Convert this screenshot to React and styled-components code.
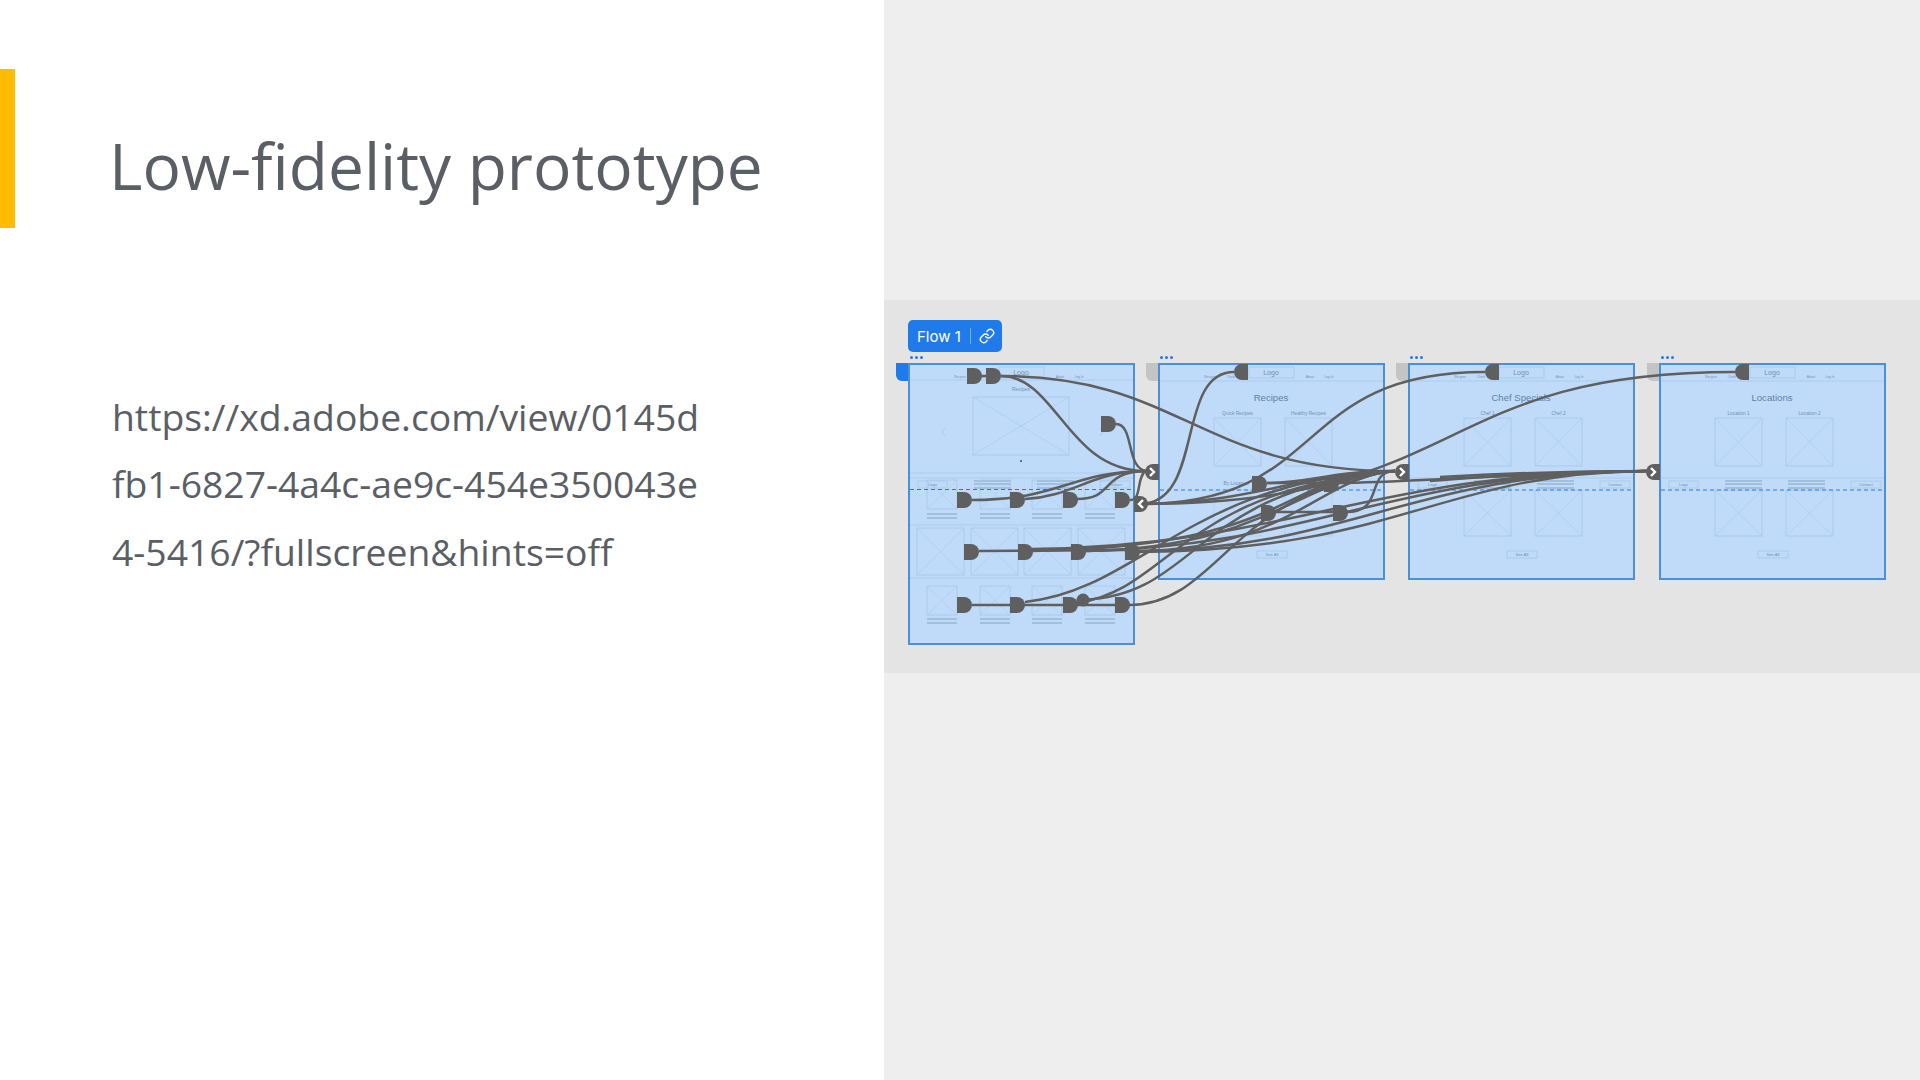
import React from 'react';
import styled, { createGlobalStyle } from 'styled-components';
import { Link } from 'lucide-react';

const GlobalStyle = createGlobalStyle`
  html, body {
    margin: 0;
    padding: 0;
    background: #fff;
  }
`;

const Page = styled.div`
  display: flex;
  width: 1920px;
  height: 1080px;
  overflow: hidden;
  font-family: "Open Sans", sans-serif;
`;

const SlidePanel = styled.section`
  width: 884px;
  padding-top: 69px;
  box-sizing: border-box;
  background: #fff;
  color: #5a5e65;
`;

const Header = styled.header`
  display: flex;
  align-items: flex-start;
`;

const AccentBar = styled.div`
  width: 15px;
  height: 159px;
  background: #ffbc00;
`;

const Title = styled.h1`
  margin: 57px 0 0 94px;
  font-size: 64px;
  line-height: 80px;
  font-weight: 400;
  white-space: nowrap;
`;

const LinkText = styled.div`
  margin: 155px 0 0 112px;
  font-size: 37.3px;
  line-height: 67.4px;
  font-weight: 400;
  white-space: nowrap;
`;

const FlowPanel = styled.section`
  flex: 1;
  padding-top: 300px;
  background: #eeeeee;
`;

const FlowCanvas = styled.div`
  position: relative;
  height: 373px;
  background: #e4e4e4;
`;

const FlowChip = styled.div`
  position: absolute;
  left: 24px;
  top: 20px;
  display: flex;
  align-items: center;
  width: 94px;
  height: 32px;
  padding-left: 9px;
  box-sizing: border-box;
  border-radius: 5px;
  background: #1f7aea;
  color: #fff;
  font-family: Inter, sans-serif;
  font-size: 15px;
`;

const ChipDivider = styled.span`
  width: 1px;
  height: 16px;
  margin: 0 8px 0 9px;
  background: rgba(255, 255, 255, 0.4);
`;

const Artboard = styled.div`
  position: absolute;
  left: ${(p) => p.$x - 884}px;
  top: 63px;
  width: 227px;
  height: ${(p) => p.$h}px;
`;

const ArtTab = styled.div`
  position: absolute;
  left: -12px;
  top: 0;
  width: 16px;
  height: 18px;
  border-radius: 0 0 0 6px;
  background: ${(p) => (p.$active ? '#1f7aea' : '#c4c4c4')};
`;

const ArtDots = styled.div`
  position: absolute;
  left: 2px;
  top: -7px;
  display: flex;
  gap: 2px;
`;

const ArtDot = styled.span`
  width: 3px;
  height: 3px;
  border-radius: 50%;
  background: #1f7aea;
`;

const ArtFrame = styled.svg`
  position: absolute;
  inset: 0;
  display: block;
  background: #bfdbf9;
  box-shadow: inset 0 0 0 2px #4a8fd8;
`;

const WireLayer = styled.svg`
  position: absolute;
  inset: 0;
  width: 100%;
  height: 100%;
  pointer-events: none;
`;

const INK = '#a6c4e6';
const LABEL = '#7391b5';

const Box = ({ x, y, w, h }) => (
  <rect x={x} y={y} width={w} height={h} fill="none" stroke={INK} strokeWidth="0.7" />
);

// wireframe image placeholder, a box with a cross
const Placeholder = ({ x, y, w, h, faint }) => (
  <g opacity={faint ? 0.65 : 1}>
    <Box x={x} y={y} w={w} h={h} />
    <path d={`M${x} ${y}L${x + w} ${y + h}M${x + w} ${y}L${x} ${y + h}`} stroke={INK} strokeWidth="0.5" />
  </g>
);

const Label = ({ x, y, size = 4.8, color = LABEL, anchor = 'middle', children }) => (
  <text x={x} y={y} fontSize={size} fill={color} textAnchor={anchor} fontFamily="Liberation Sans, sans-serif">
    {children}
  </text>
);

const Lines = ({ x, w, ys, width = 1 }) => (
  <g stroke="#86a3c4" strokeWidth={width}>
    {ys.map((y) => (
      <line key={y} x1={x} x2={x + w} y1={y} y2={y} />
    ))}
  </g>
);

const TopNav = ({ lineY }) => (
  <>
    <Box x={91} y={4} w={45} h={11} />
    <line x1="2" x2="225" y1={lineY} y2={lineY} stroke={INK} strokeWidth="0.6" />
    <Label x={113} y={12} size={7}>Logo</Label>
    <Label x={52} y={14.5} size={3.2}>Recipes</Label>
    <Label x={73} y={14.5} size={3.2}>Chefs</Label>
    <Label x={152} y={14.5} size={3.2}>About</Label>
    <Label x={171} y={14.5} size={3.2}>Log In</Label>
  </>
);

const FooterBar = ({ y }) => (
  <>
    <line x1="2" x2="225" y1={y - 3} y2={y - 3} stroke={INK} strokeWidth="0.6" />
    <Box x={10} y={y} w={29} h={7} />
    <Label x={24.5} y={y + 5} size={4}>Logo</Label>
    <Lines x={66} w={37} ys={[y, y + 3, y + 7]} />
    <Lines x={129} w={37} ys={[y, y + 3, y + 7]} />
    <Box x={192} y={y} w={30} h={7} />
    <Label x={207} y={y + 5} size={4}>Contact</Label>
  </>
);

const HomeSketch = () => (
  <ArtFrame width="227" height="282" viewBox="0 0 227 282">
    <TopNav lineY={17} />
    <Label x={113} y={28} size={5}>Recipes</Label>
    <Placeholder x={65} y={34} w={96} h={58} />
    <path d="M37 65l-3 4 3 4M192 65l3 4-3 4" fill="none" stroke={INK} strokeWidth="0.8" />
    <circle cx="113" cy="98" r="0.9" fill="#2f3f55" />
    <line x1="2" x2="225" y1="110" y2="110" stroke={INK} strokeWidth="0.6" />
    <FooterBar y={118} />
    {[19, 72, 124, 177].map((x) => (
      <React.Fragment key={x}>
        <Placeholder x={x} y={117} w={30} h={29} />
        <Lines x={x} w={30} ys={[151, 155]} />
        <Placeholder x={x} y={223} w={30} h={29} />
        <Lines x={x} w={30} ys={[256, 260]} />
      </React.Fragment>
    ))}
    <line x1="2" x2="225" y1="162" y2="162" stroke={INK} strokeWidth="0.6" />
    {[9, 63, 116, 170].map((x) => (
      <Placeholder key={x} x={x} y={165} w={47} h={47} />
    ))}
    <line x1="2" x2="225" y1="215" y2="215" stroke={INK} strokeWidth="0.6" />
    <line x1="2" x2="225" y1="126.5" y2="126.5" stroke="#1f7aea" strokeWidth="1" strokeDasharray="4 3" />
  </ArtFrame>
);

const PageSketch = ({ title, left, right, footer, note }) => (
  <ArtFrame width="227" height="217" viewBox="0 0 227 217">
    <TopNav lineY={18} />
    <Label x={113} y={37.5} size={9.6} color="#5f80a8">{title}</Label>
    <Label x={79.5} y={51.5}>{left}</Label>
    <Label x={150.5} y={51.5}>{right}</Label>
    <Placeholder x={56} y={55} w={47} h={48} />
    <Placeholder x={127} y={55} w={47} h={48} />
    {footer && <FooterBar y={118} />}
    {note && <Label x={78} y={122}>{note}</Label>}
    <Placeholder x={56} y={127} w={47} h={46} faint={!footer} />
    <Placeholder x={127} y={127} w={47} h={46} faint={!footer} />
    <Box x={99} y={188} w={30} h={7} />
    <Label x={114} y={193.2} size={4.2}>See All</Label>
    <line x1="2" x2="225" y1="127" y2="127" stroke="#1f7aea" strokeWidth="1" strokeDasharray="4 3" />
  </ArtFrame>
);

const ARTBOARDS = [
  { x: 908, h: 282, active: true, sketch: <HomeSketch /> },
  { x: 1158, h: 217, sketch: <PageSketch title="Recipes" left="Quick Recipes" right="Healthy Recipes" note="By Location" /> },
  { x: 1408, h: 217, sketch: <PageSketch title="Chef Specials" left="Chef 1" right="Chef 2" footer /> },
  { x: 1659, h: 217, sketch: <PageSketch title="Locations" left="Location 1" right="Location 2" footer /> },
];

const WIRES = [
  // top nav of the home board
  'M981 376L986 376',
  'M1001 376C1056 376 1068 471 1145 471',
  'M1001 376C1180 376 1200 471 1395 471',
  'M1116 424C1135 424 1125 471 1148 471',
  // first row of the home board
  'M972 500C1060 500 1070 472 1145 471',
  'M1025 499C1075 496 1090 472 1145 471',
  'M1077 499C1115 499 1100 472 1145 471',
  'M1130 500C1142 500 1136 480 1145 471',
  // back connector out to the three page tops
  'M1140 504C1205 504 1175 372 1234 372',
  'M1140 504C1330 504 1290 372 1485 372',
  'M1140 504C1470 504 1430 372 1735 372',
  'M1140 504C1260 503 1300 472 1395 471',
  // second row of the home board, the bundle
  'M979 551L1125 550',
  'M1032 551C1300 546 1280 473 1395 471',
  'M1086 551C1270 548 1300 476 1395 471',
  'M1139 551C1290 549 1320 476 1395 471',
  'M1032 549C1290 546 1370 472 1646 471',
  'M1086 551C1310 547 1390 473 1646 471',
  'M1139 551C1350 549 1410 473 1646 471',
  'M1139 552C1400 550 1440 473 1646 471',
  // third row of the home board
  'M972 605L1130 605',
  'M1025 602C1140 590 1190 480 1395 471',
  'M1077 603C1170 590 1180 490 1395 471',
  'M1083 600C1200 595 1190 490 1395 471',
  'M1130 605C1220 604 1230 490 1395 471',
  // nodes on the recipes board
  'M1267 483L1324 483',
  'M1276 512L1333 512',
  'M1267 483C1310 483 1330 471 1395 471',
  'M1339 483C1360 483 1370 471 1395 471',
  'M1347 512C1385 512 1365 471 1395 471',
  'M1339 483C1400 482 1480 476 1646 471',
  // thickens the shared run into the chef connector
  'M1440 477C1510 473 1570 471 1652 471',
  'M1430 481C1510 474 1570 472 1652 471',
];

const RIGHT_NODES = [
  [967, 368], [986, 368], [1101, 416],
  [957, 492], [1010, 492], [1063, 492], [1115, 492],
  [964, 544], [1018, 544], [1071, 544], [1125, 544],
  [957, 597], [1010, 597], [1063, 597], [1115, 597],
  [1252, 476], [1324, 476], [1261, 505], [1333, 505],
];

const LEFT_NODES = [[1234, 364], [1485, 364], [1735, 364]];

const FORWARD = [[1145, 464], [1395, 464], [1646, 464]];

const WIRE_COLOR = '#5f5f5f';

const App = () => (
  <>
    <GlobalStyle />
    <Page>
      <SlidePanel>
        <Header>
          <AccentBar />
          <Title>Low-fidelity prototype</Title>
        </Header>
        <LinkText>
          https://xd.adobe.com/view/0145d
          <br />
          fb1-6827-4a4c-ae9c-454e350043e
          <br />
          4-5416/?fullscreen&amp;hints=off
        </LinkText>
      </SlidePanel>
      <FlowPanel>
        <FlowCanvas>
          <FlowChip>
            Flow 1
            <ChipDivider />
            <Link size={16} strokeWidth={2} />
          </FlowChip>
          {ARTBOARDS.map((board) => (
            <Artboard key={board.x} $x={board.x} $h={board.h}>
              <ArtTab $active={board.active} />
              <ArtDots>
                <ArtDot />
                <ArtDot />
                <ArtDot />
              </ArtDots>
              {board.sketch}
            </Artboard>
          ))}
          <WireLayer viewBox="884 300 1036 373">
            <g fill="none" stroke={WIRE_COLOR} strokeWidth="2.5">
              {WIRES.map((d) => (
                <path key={d} d={d} />
              ))}
            </g>
            <g fill={WIRE_COLOR}>
              {RIGHT_NODES.map(([x, y]) => (
                <path key={`${x}-${y}`} d={`M${x} ${y}h7a8 8 0 0 1 0 16h-7z`} />
              ))}
              {LEFT_NODES.map(([x, y]) => (
                <path key={x} d={`M${x + 14} ${y}h-6a8 8 0 0 0 0 16h6z`} />
              ))}
              <circle cx="1083" cy="600" r="6.5" />
              {FORWARD.map(([x, y]) => (
                <path key={x} d={`M${x + 14} ${y}h-6a8 8 0 0 0 0 16h6z`} />
              ))}
              <path d="M1134 496h6a8 8 0 0 1 0 16h-6z" />
            </g>
            <g fill="none" stroke="#fff" strokeWidth="2.4">
              {FORWARD.map(([x, y]) => (
                <path key={x} d={`M${x + 5} ${y + 4}l4 4-4 4`} />
              ))}
              <path d="M1143 500l-4 4 4 4" />
            </g>
          </WireLayer>
        </FlowCanvas>
      </FlowPanel>
    </Page>
  </>
);

export default App;
